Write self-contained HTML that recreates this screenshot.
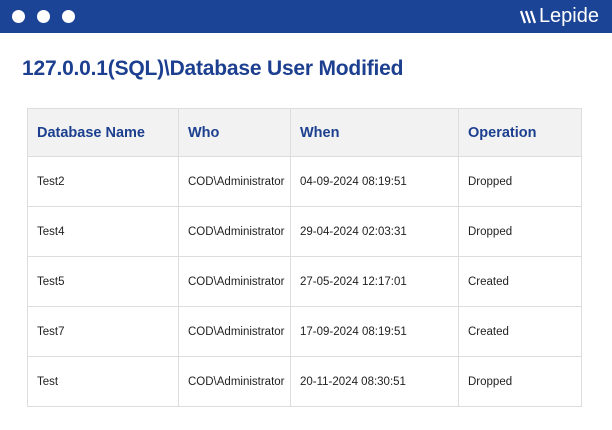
<!DOCTYPE html>
<html><head><style>
body{margin:0;width:612px;height:430px;background:#fff;font-family:"Liberation Sans",sans-serif;overflow:hidden;position:relative}
.bar{position:absolute;left:0;top:0;width:612px;height:33px;background:#1c4496}
.dot{position:absolute;top:10px;width:13px;height:13px;border-radius:50%;background:#fff}
.logo{position:absolute;right:13px;top:5px;color:#fff;font-size:20px;display:flex;align-items:center;gap:3px}
h1{position:absolute;left:22px;top:57px;margin:0;font-size:21px;color:#1c3f8f;font-weight:bold;letter-spacing:-0.2px}
table{position:absolute;left:27px;top:108px;border-collapse:collapse;width:554px;table-layout:fixed}
td,th{border:1px solid #ddd;text-align:left;padding:0 0 0 9px;font-size:11.5px;color:#222;height:49px;white-space:nowrap;overflow:hidden}
th{background:#f2f2f2;color:#1c3f8f;font-size:14.5px;height:47px}
</style></head><body>
<div class="bar">
<div class="dot" style="left:12px"></div><div class="dot" style="left:37px"></div><div class="dot" style="left:62px"></div>
<div class="logo"><svg width="16" height="14" viewBox="0 0 16 14"><g stroke="#fff" stroke-width="2.2"><path d="M1 1l4 12M6 1l4 12M11 1l4 12"/></g></svg><span>Lepide</span></div>
</div>
<h1>127.0.0.1(SQL)\Database User Modified</h1>
<table>
<colgroup><col style="width:151px"><col style="width:112px"><col style="width:168px"><col style="width:123px"></colgroup>
<tr><th>Database Name</th><th>Who</th><th>When</th><th>Operation</th></tr>
<tr><td>Test2</td><td>COD\Administrator</td><td>04-09-2024 08:19:51</td><td>Dropped</td></tr>
<tr><td>Test4</td><td>COD\Administrator</td><td>29-04-2024 02:03:31</td><td>Dropped</td></tr>
<tr><td>Test5</td><td>COD\Administrator</td><td>27-05-2024 12:17:01</td><td>Created</td></tr>
<tr><td>Test7</td><td>COD\Administrator</td><td>17-09-2024 08:19:51</td><td>Created</td></tr>
<tr><td>Test</td><td>COD\Administrator</td><td>20-11-2024 08:30:51</td><td>Dropped</td></tr>
</table>
</body></html>
